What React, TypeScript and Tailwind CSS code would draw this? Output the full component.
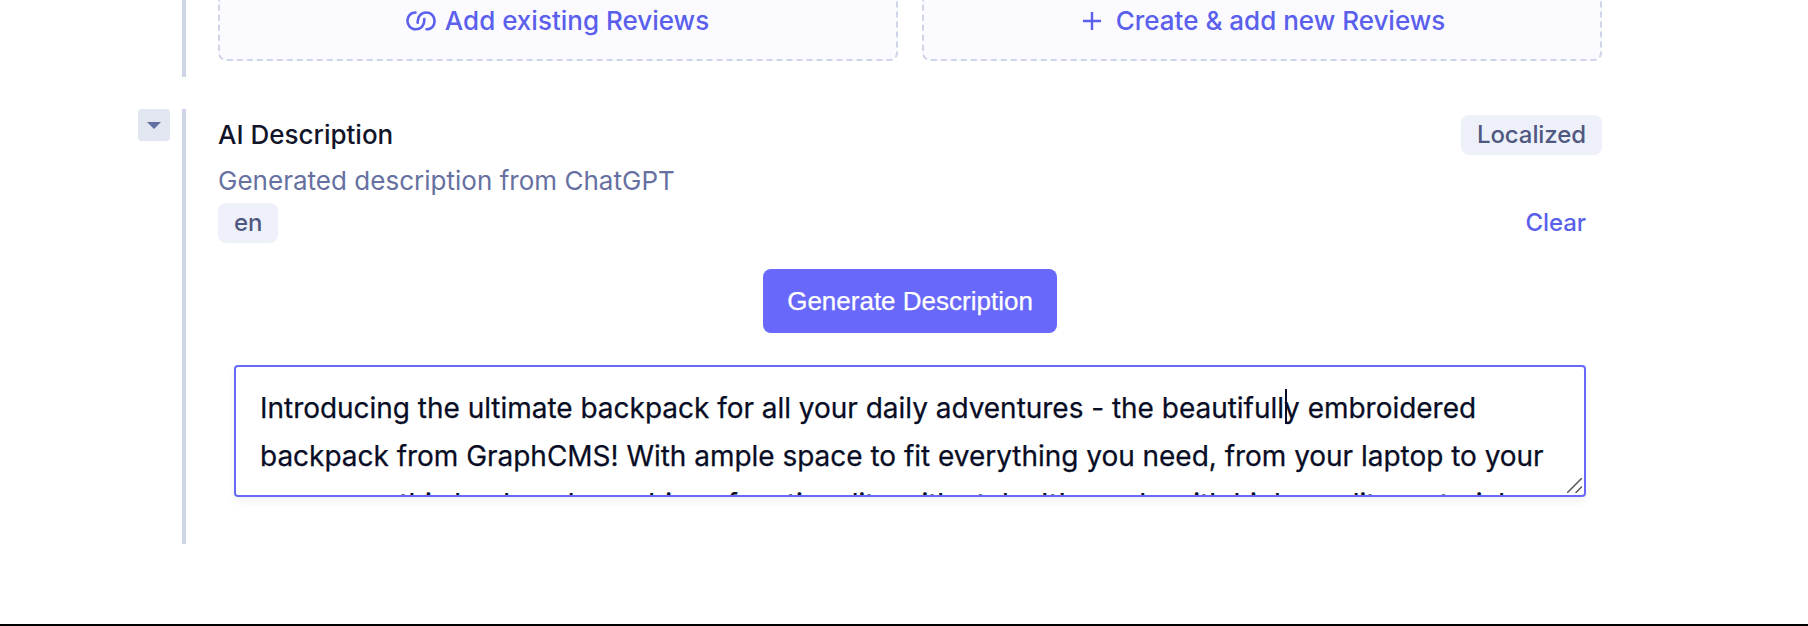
const description =
  "Introducing the ultimate backpack for all your daily adventures - the beautifully embroidered backpack from GraphCMS! With ample space to fit everything you need, from your laptop to your gym gear, this backpack combines functionality with style. It's made with high-quality materials";

function LinkIcon() {
  return (
    <svg className="mr-[9px] -ml-px h-[20px] w-[30px]" viewBox="11 11 30 20" fill="none" stroke="currentColor" strokeWidth="2.6" strokeLinecap="round">
      <path d="M20.500 12.500C15.300 12.500 12.400 16.500 12.400 20.800S15.500 29.300 20.700 29.300S29.300 25.500 29.300 20.500V19" />
      <path d="M31.500 29.300C36.700 29.300 39.600 25.300 39.600 21S36.500 12.500 31.300 12.500S22.700 16.300 22.700 21.300V22.800" />
    </svg>
  );
}

export default function App() {
  return (
    <div className="flex h-[626px] w-[1808px] flex-col overflow-hidden border-b-2 border-black bg-white font-['Inter',sans-serif] font-medium">
      <div className="ml-[182px] h-[77px] w-[1420px] border-l-4 border-[#cfd5e9] pl-8">
        <div className="flex h-[61px] gap-6 text-[26px] text-[#5a5fec]">
          <div className="flex flex-1 items-center justify-center rounded-b-lg border-2 border-t-0 border-dashed border-[#cfd5e9] bg-[#fbfbff] pb-[18px]">
            <LinkIcon />
            <span>Add existing Reviews</span>
          </div>
          <div className="flex flex-1 items-center justify-center rounded-b-lg border-2 border-t-0 border-dashed border-[#cfd5e9] bg-[#fbfbff] pb-[18px]">
            <svg className="mr-3.5 ml-[3px] h-5 w-5" viewBox="0 0 20 20" stroke="currentColor" strokeWidth="2.4">
              <path d="M10 1v18M1 10h18" />
            </svg>
            <span>Create &amp; add new Reviews</span>
          </div>
        </div>
      </div>

      <div className="mt-8 ml-[138px] flex h-[435px] w-[1464px]">
        <button className="mr-3 flex h-8 w-8 items-center justify-center rounded bg-[#e2e6f1]">
          <svg className="h-[7px] w-[14px]" viewBox="0 0 14 7">
            <path d="M0 0h14L7 7z" fill="#636fa0" />
          </svg>
        </button>
        <div className="flex flex-1 flex-col border-l-4 border-[#cfd5e9] pt-1.5 pl-8">
          <div className="flex h-10 items-center justify-between">
            <h2 className="text-[26px] leading-10 text-[#121529]">AI Description</h2>
            <span className="flex h-10 w-[141px] items-center rounded-lg bg-[#eef1f9] px-4 text-[24px] tracking-[-0.1px] text-[#4f5880]">Localized</span>
          </div>
          <p className="mt-1.5 h-[42px] text-[26px] leading-[40px] font-normal tracking-[0.02px] text-[#6671a1]">Generated description from ChatGPT</p>
          <div className="flex h-10 items-center justify-between text-[24px] tracking-[-0.1px]">
            <span className="flex h-10 w-[60px] items-center rounded-lg bg-[#eef1f9] px-4 text-[#4f5880]">en</span>
            <button className="pr-4 text-[#5a5fec]">Clear</button>
          </div>
          <button className="mt-[26px] h-16 w-[294px] self-center rounded-lg bg-[#6869fa] font-['Liberation_Sans',Arial,sans-serif] text-[26px] font-normal text-white [-webkit-text-stroke:0.25px_white]">
            Generate Description
          </button>
          <div className="relative mx-4 mt-8 h-[132px] overflow-hidden rounded border-2 border-[#6869fa] bg-white px-6 pt-[17px] text-[28px] leading-[48px] font-normal tracking-[-0.025px] text-[#080d25] shadow-[0_4px_8px_rgba(0,0,0,0.06)] [-webkit-text-stroke:0.25px_#080d25]">
            <p>{description}</p>
            <span className="absolute top-[22px] left-[1049px] h-[35px] w-0.5 bg-[#080d25]" />
            <svg className="absolute right-[2px] bottom-[2px] h-[15px] w-[15px]" viewBox="0 0 15 15" stroke="#555" strokeWidth="1.5">
              <path d="M0 15L15 0M8.500 15L15 8.500" />
            </svg>
          </div>
        </div>
      </div>
    </div>
  );
}
